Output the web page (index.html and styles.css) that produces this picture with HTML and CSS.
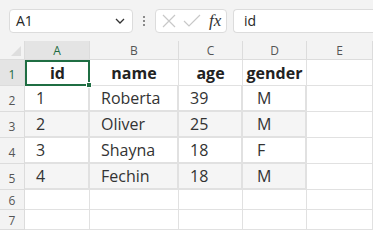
FILE: index.html
```html
<!DOCTYPE html>
<html lang="en">
  <head>
    <meta charset="UTF-8" />
    <title>Sheet</title>
    <link rel="stylesheet" href="styles.css">
  </head>
  <body>
    <div class="toolbar">
      <div class="name-box">
        <span>A1</span>
        <svg width="12" height="8" viewBox="0 0 12 8"><path d="M2 2 L6 6 L10 2" fill="none" stroke="#333" stroke-width="1.3"/></svg>
      </div>
      <div class="grip"><span></span><span></span><span></span></div>
      <div class="fx-box">
        <svg width="16" height="16" viewBox="0 0 16 16"><path d="M2 2 L14 14 M14 2 L2 14" stroke="#c8c8c8" stroke-width="1.2"/></svg>
        <svg width="18" height="16" viewBox="0 0 18 16"><path d="M1 8 L6 13 L17 2" fill="none" stroke="#c8c8c8" stroke-width="1.2"/></svg>
        <span class="fx">fx</span>
      </div>
      <div class="formula">id</div>
    </div>

    <div class="sheet">
      <div class="corner"></div>
      <div class="col-head sel">A</div>
      <div class="col-head">B</div>
      <div class="col-head">C</div>
      <div class="col-head">D</div>
      <div class="col-head">E</div>

      <div class="row-head sel">1</div>
      <div class="cell head active">id<span class="handle"></span></div>
      <div class="cell head">name</div>
      <div class="cell head">age</div>
      <div class="cell head">gender</div>
      <div class="cell"></div>

      <div class="row-head">2</div>
      <div class="cell data">1</div>
      <div class="cell data">Roberta</div>
      <div class="cell data">39</div>
      <div class="cell data g">M</div>
      <div class="cell"></div>

      <div class="row-head">3</div>
      <div class="cell data alt">2</div>
      <div class="cell data alt">Oliver</div>
      <div class="cell data alt">25</div>
      <div class="cell data alt g">M</div>
      <div class="cell"></div>

      <div class="row-head">4</div>
      <div class="cell data">3</div>
      <div class="cell data">Shayna</div>
      <div class="cell data">18</div>
      <div class="cell data g">F</div>
      <div class="cell"></div>

      <div class="row-head">5</div>
      <div class="cell data alt">4</div>
      <div class="cell data alt">Fechin</div>
      <div class="cell data alt">18</div>
      <div class="cell data alt g">M</div>
      <div class="cell"></div>

      <div class="row-head small">6</div>
      <div class="cell"></div>
      <div class="cell"></div>
      <div class="cell"></div>
      <div class="cell"></div>
      <div class="cell"></div>

      <div class="row-head small">7</div>
      <div class="cell"></div>
      <div class="cell"></div>
      <div class="cell"></div>
      <div class="cell"></div>
      <div class="cell"></div>
    </div>
  </body>
</html>
```

FILE: styles.css
```css
* {
  margin: 0;
  padding: 0;
  box-sizing: border-box;
  font-family: "Open Sans", "Noto Sans", sans-serif;
}

body {
  width: 373px;
  height: 230px;
  overflow: hidden;
  background-color: #ffffff;
  color: #262626;
}

.toolbar {
  display: flex;
  align-items: center;
  height: 41px;
  padding: 0 0 0 9px;
  background-color: #f3f3f3;
}
.name-box {
  width: 124px;
  height: 24px;
  display: flex;
  align-items: center;
  justify-content: space-between;
  padding: 0 6px 0 6px;
  background-color: #ffffff;
  border: 1px solid #dcdcdc;
  border-radius: 4px;
  font-size: 14px;
}
.grip {
  width: 22px;
  display: flex;
  flex-direction: column;
  align-items: center;
  gap: 2px;
}
.grip span {
  display: block;
  width: 2px;
  height: 2px;
  background-color: #8a8a8a;
}
.fx-box {
  width: 72px;
  height: 24px;
  display: flex;
  align-items: center;
  gap: 6px;
  padding-left: 5px;
  background-color: #ffffff;
  border: 1px solid #dcdcdc;
  border-radius: 4px;
}
.fx {
  font-family: "Liberation Serif", serif;
  font-style: italic;
  font-size: 17px;
  color: #333;
  margin-left: 2px;
}
.formula {
  flex: 1;
  height: 24px;
  margin-left: 6px;
  padding-left: 10px;
  display: flex;
  align-items: center;
  background-color: #ffffff;
  border: 1px solid #dcdcdc;
  border-right: none;
  border-radius: 4px 0 0 4px;
  font-size: 14px;
}

.sheet {
  display: grid;
  grid-template-columns: 25px 65px 89px 64px 64px 66px;
  grid-template-rows: 19px 26px 26px 26px 26px 26px 20px 20px;
}
.corner,
.col-head,
.row-head {
  background-color: #f3f3f3;
  color: #555;
  font-size: 12px;
  display: flex;
  align-items: center;
  justify-content: center;
  border-right: 1px solid #dcdcdc;
  border-bottom: 1px solid #dcdcdc;
}
.corner {
  position: relative;
}
.corner::after {
  content: "";
  position: absolute;
  right: 3px;
  bottom: 3px;
  border-left: 10px solid transparent;
  border-bottom: 10px solid #dedede;
}
.col-head.sel,
.row-head.sel {
  background-color: #e4e4e4;
  color: #1e6b41;
}
.row-head {
  padding-top: 3px;
}
.row-head.small {
  padding-top: 1px;
}

.cell {
  border-right: 1px solid #e1e1e1;
  border-bottom: 1px solid #e1e1e1;
  font-size: 16px;
  display: flex;
  align-items: center;
}
.cell.head {
  justify-content: center;
  font-weight: bold;
  color: #222;
}
.cell.data {
  padding-left: 11px;
  border-right: 2px solid #e1e1e1;
  border-bottom: 2px solid #e1e1e1;
  color: #333;
}
.cell.data.g {
  padding-left: 14px;
}
.cell.alt {
  background-color: #f5f5f5;
}
.cell.active {
  position: relative;
  border: 2px solid #1f6e43;
}
.handle {
  position: absolute;
  right: -4px;
  bottom: -4px;
  width: 6px;
  height: 6px;
  background-color: #1f6e43;
  border: 1px solid #ffffff;
}
```
